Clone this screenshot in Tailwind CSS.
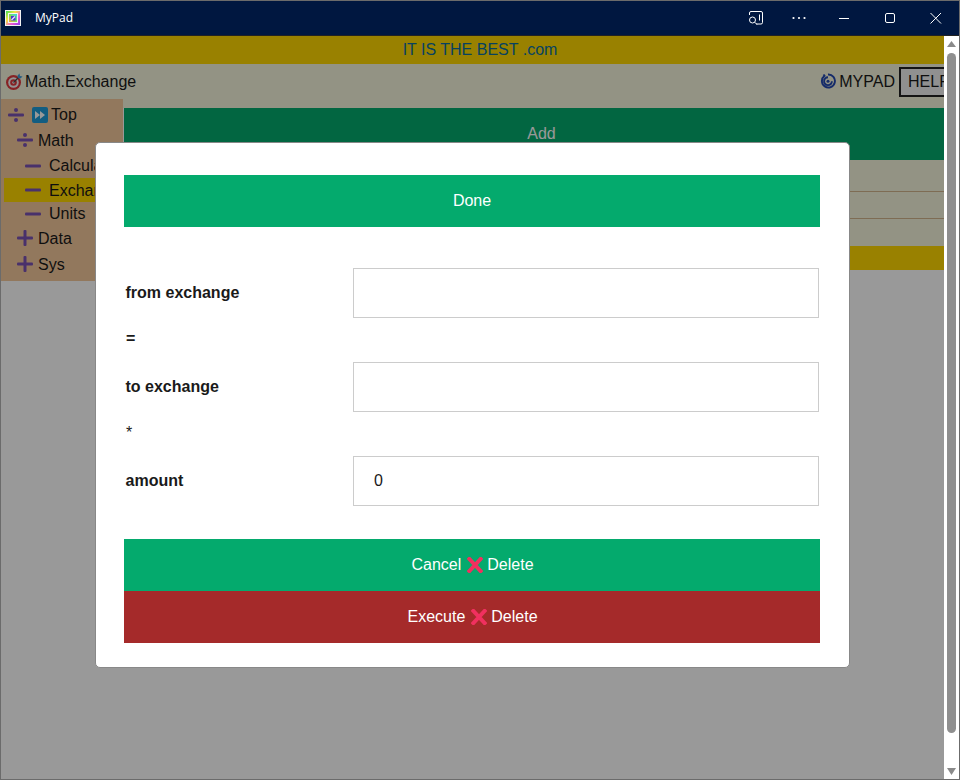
<!DOCTYPE html>
<html lang="en">
<head>
  <meta charset="UTF-8" />
  <title>MyPad</title>
  <script src="https://cdn.jsdelivr.net/npm/@tailwindcss/browser@4"></script>
</head>
<body class="h-[780px] w-[960px] overflow-hidden font-['Liberation_Sans',Arial,sans-serif] text-base text-[#1a1a1a]">
  <div class="flex h-full flex-col border border-[#6b6b6b]">
    <!-- title bar -->
    <div class="flex h-[34px] shrink-0 items-center bg-[#001740] text-white font-['Open_Sans',sans-serif]">
      <svg class="ml-[4px] h-4 w-4" viewBox="0 0 16 16">
        <defs>
          <linearGradient id="rainbow" x1="0" y1="0" x2="1" y2="1">
            <stop offset="0" stop-color="#39e05a"/>
            <stop offset=".35" stop-color="#f5e63c"/>
            <stop offset=".65" stop-color="#f05ad0"/>
            <stop offset="1" stop-color="#8a3cf0"/>
          </linearGradient>
          <linearGradient id="rainbow2" x1="1" y1="0" x2="0" y2="1">
            <stop offset="0" stop-color="#35d5f0"/>
            <stop offset=".5" stop-color="#7ae05a"/>
            <stop offset="1" stop-color="#f5a03c"/>
          </linearGradient>
        </defs>
        <rect width="16" height="16" fill="#f2f2f2"/>
        <rect x="1" y="1" width="14" height="14" fill="url(#rainbow)"/>
        <rect x="3" y="3" width="10" height="10" fill="#f4f4f4"/>
        <rect x="4" y="4" width="8" height="8" fill="url(#rainbow2)"/>
        <rect x="6" y="6" width="4.500" height="4.500" fill="#4a35d0"/>
        <path d="M6.500 10 10 6.500" stroke="#e8e8ff" stroke-width="1.200"/>
      </svg>
      <span class="ml-[14px] text-xs">MyPad</span>
      <div class="ml-auto flex items-center text-white">
        <svg class="h-4 w-4" viewBox="0 0 16 16" fill="none" stroke="#fff" stroke-width="1">
          <path d="M1.500 5V3A1.500 1.500 0 0 1 3 1.500H13A1.500 1.500 0 0 1 14.500 3V12.500A1.500 1.500 0 0 1 13 14H8M11.500 4.500V10.500"/>
          <circle cx="4.500" cy="10" r="3"/>
          <path d="M6.700 12.200 9 14.500"/>
        </svg>
        <svg class="ml-[27px] h-4 w-4" viewBox="0 0 16 16" fill="#fff"><circle cx="2.500" cy="8" r="1.100"/><circle cx="8" cy="8" r="1.100"/><circle cx="13.500" cy="8" r="1.100"/></svg>
        <svg class="ml-[29px] h-4 w-4" viewBox="0 0 16 16" stroke="#fff"><path d="M3 8.500H13"/></svg>
        <svg class="ml-[30px] h-4 w-4" viewBox="0 0 16 16" fill="none" stroke="#fff"><rect x="3.500" y="3.500" width="9" height="9" rx="1.500"/></svg>
        <svg class="ml-[30px] mr-[15px] h-4 w-4" viewBox="0 0 16 16" stroke="#fff"><path d="M2.500 3 13 13.500M13 3 2.500 13.500"/></svg>
      </div>
    </div>

    <div class="relative flex min-h-0 flex-1 border-t border-[#222]">
      <!-- page, wider than the viewport so HELP is clipped -->
      <div class="w-[943px] overflow-hidden">
        <div class="w-[958px]">
          <div class="flex h-[28px] items-center justify-center bg-[#ffd700] text-[#0a6fa0]">IT IS THE BEST .com</div>
          <div class="flex h-[44px] items-start bg-[#f5f5dc] pl-[5px] pt-[3px]">
            <svg class="mt-[6px] h-[17px] w-[17px]" viewBox="0 0 17 17">
              <circle cx="7.500" cy="9.500" r="7.500" fill="#e0393e"/>
              <circle cx="7.500" cy="9.500" r="5.300" fill="#f5f5f5"/>
              <circle cx="7.500" cy="9.500" r="3.300" fill="#e0393e"/>
              <circle cx="7.500" cy="9.500" r="1.200" fill="#f5f5f5"/>
              <path d="M7.500 9.500 13 4" stroke="#4a4a4a" stroke-width="1.200"/>
              <path d="M11.500 2.500 13.500 .5 14 3 16.500 3.500 14.500 5.500 12 5Z" fill="#3f9bd8"/>
            </svg>
            <span class="ml-[2px] leading-[30px]">Math.Exchange</span>
            <svg class="ml-auto mt-[6px] h-4 w-4" viewBox="0 0 16 16" fill="none" stroke="#2348b0" stroke-width="1.900">
              <path d="M3.500 1.500 4.500 2.800A6.500 6.500 0 1 0 8 1.500M8 4.300A3.900 3.900 0 1 0 11.900 8.200"/>
              <circle cx="8" cy="8.200" r="1.500" fill="#2348b0" stroke="none"/>
            </svg>
            <span class="ml-[3px] leading-[30px]">MYPAD</span>
            <button class="ml-[4px] h-[30px] w-[60px] border-2 border-[#222] bg-[#f0f0f0] pl-[7px] text-left">HELP</button>
          </div>
          <div class="flex">
            <div class="w-[123px] shrink-0"></div>
            <div class="flex-1">
              <div class="flex h-[52px] items-center justify-center bg-[#04aa6d] text-white">Add</div>
              <div class="h-[32px] border-b border-[#d2b48c] bg-[#f5f5dc]"></div>
              <div class="h-[27px] border-b border-[#d2b48c] bg-[#f5f5dc]"></div>
              <div class="h-[27px] bg-[#f5f5dc]"></div>
              <div class="h-[24px] bg-[#ffd700]"></div>
            </div>
          </div>
        </div>
      </div>

      <!-- tree menu -->
      <div class="absolute left-0 top-[63px] h-[182px] w-[122px] overflow-hidden bg-[#f4c89c] pt-[3px] leading-[25px] whitespace-nowrap">
        <div class="flex h-[25px] items-center pl-[7px]">
          <svg class="h-4 w-4" viewBox="0 0 16 16" fill="#7a52b3"><circle cx="8" cy="3" r="2"/><rect y="6.500" width="16" height="3" rx="1"/><circle cx="8" cy="13" r="2"/></svg>
          <svg class="ml-[8px] h-4 w-4" viewBox="0 0 16 16"><rect width="16" height="16" rx="2" fill="#1e9bd7"/><path d="M3 4 8 8 3 12ZM8 4 13 8 8 12Z" fill="#fff"/></svg>
          <span class="ml-[3px]">Top</span>
        </div>
        <div class="flex h-[26px] items-center pl-[16px]">
          <svg class="h-4 w-4" viewBox="0 0 16 16" fill="#7a52b3"><circle cx="8" cy="3" r="2"/><rect y="6.500" width="16" height="3" rx="1"/><circle cx="8" cy="13" r="2"/></svg>
          <span class="ml-[5px]">Math</span>
        </div>
        <div class="flex h-[25px] items-center pl-[24px]">
          <svg class="h-4 w-4" viewBox="0 0 16 16" fill="#7a52b3"><rect y="6.500" width="16" height="3" rx="1"/></svg>
          <span class="ml-[8px]">Calculator</span>
        </div>
        <div class="ml-[3px] flex h-[24px] items-center bg-[#ffd700] pl-[21px]">
          <svg class="h-4 w-4" viewBox="0 0 16 16" fill="#7a52b3"><rect y="6.500" width="16" height="3" rx="1"/></svg>
          <span class="ml-[8px]">Exchange</span>
        </div>
        <div class="flex h-[23px] items-center pl-[24px]">
          <svg class="h-4 w-4" viewBox="0 0 16 16" fill="#7a52b3"><rect y="6.500" width="16" height="3" rx="1"/></svg>
          <span class="ml-[8px]">Units</span>
        </div>
        <div class="flex h-[26px] items-center pl-[16px]">
          <svg class="h-4 w-4" viewBox="0 0 16 16" fill="#7a52b3"><rect y="6.500" width="16" height="3" rx="1"/><rect x="6.500" width="3" height="16" rx="1"/></svg>
          <span class="ml-[5px]">Data</span>
        </div>
        <div class="flex h-[26px] items-center pl-[16px]">
          <svg class="h-4 w-4" viewBox="0 0 16 16" fill="#7a52b3"><rect y="6.500" width="16" height="3" rx="1"/><rect x="6.500" width="3" height="16" rx="1"/></svg>
          <span class="ml-[5px]">Sys</span>
        </div>
      </div>

      <!-- modal backdrop -->
      <div class="absolute inset-y-0 left-0 w-[943px] bg-black/40">
        <div class="absolute left-[94px] top-[106px] h-[526px] w-[755px] rounded-[5px] border border-[#888] bg-white pl-[28px] pt-[32px] text-[#1a1a1a]">
          <button class="block h-[52px] w-[696px] bg-[#04aa6d] text-white">Done</button>
          <div class="mt-[41px] flex h-[50px] w-[695px] items-center">
            <label class="w-[229px] pl-[1.500px] font-bold">from exchange</label>
            <input class="h-[50px] w-[466px] border border-[#ccc] px-[20px]" />
          </div>
          <div class="h-[44px] pl-[2px] pt-[12px] font-bold leading-[18px]">=</div>
          <div class="flex h-[50px] w-[695px] items-center">
            <label class="w-[229px] pl-[1.500px] font-bold">to exchange</label>
            <input class="h-[50px] w-[466px] border border-[#ccc] px-[20px]" />
          </div>
          <div class="h-[44px] pl-[2px] pt-[12px] leading-[18px]">*</div>
          <div class="flex h-[50px] w-[695px] items-center">
            <label class="w-[229px] pl-[1.500px] font-bold">amount</label>
            <input class="h-[50px] w-[466px] border border-[#ccc] px-[20px]" value="0" />
          </div>
          <button class="mt-[33px] flex h-[52px] w-[696px] items-center justify-center bg-[#04aa6d] pl-[1px] text-white">
            Cancel
            <svg class="ml-[6px] mr-[4px] h-4 w-4" viewBox="0 0 16 16" stroke="#f0305f" stroke-width="4"><path d="M1 .5 15 15.500M15 .5 1 15.500"/></svg>
            Delete
          </button>
          <button class="flex h-[52px] w-[696px] items-center justify-center bg-[#a52a2a] pl-[1px] text-white">
            Execute
            <svg class="ml-[6px] mr-[4px] h-4 w-4" viewBox="0 0 16 16" stroke="#f0305f" stroke-width="4"><path d="M1 .5 15 15.500M15 .5 1 15.500"/></svg>
            Delete
          </button>
        </div>
      </div>

      <!-- scrollbar -->
      <div class="flex w-[15px] shrink-0 flex-col items-center bg-white">
        <svg class="mt-[5px] h-[6px] w-[9px]" viewBox="0 0 9 6" fill="#8a8a8a"><path d="M4.500 0 9 6H0Z"/></svg>
        <div class="mt-[6px] h-[680px] w-[9px] rounded-full bg-[#8f8f8f]"></div>
        <svg class="mt-auto mb-[4px] h-[7px] w-[9px]" viewBox="0 0 9 7" fill="#8a8a8a"><path d="M0 0H9L4.500 7Z"/></svg>
      </div>
    </div>
  </div>
</body>
</html>
